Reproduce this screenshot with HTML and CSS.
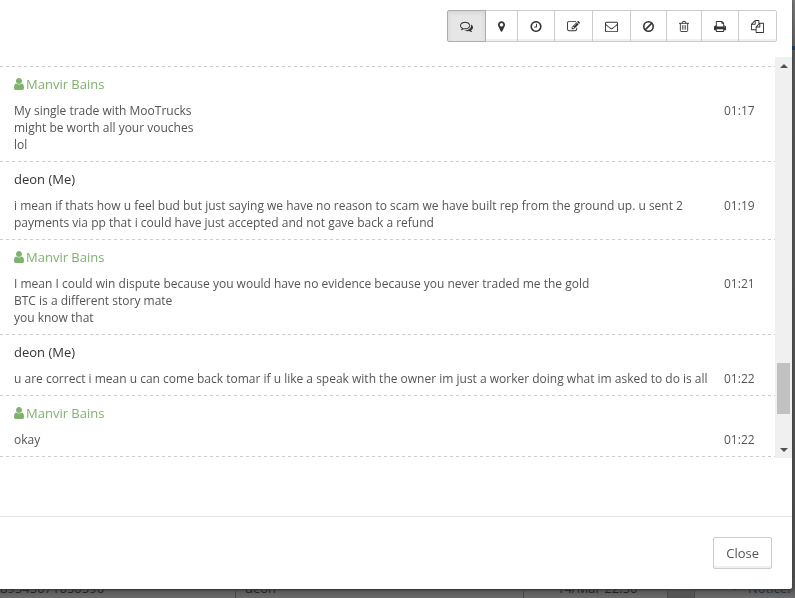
FILE: index.html
```
<!DOCTYPE html>
<html lang="en">
<head>
<meta charset="utf-8">
<title>Conversation</title>
<link rel="stylesheet" href="styles.css">
</head>
<body>
<svg class="sprite" aria-hidden="true">
  <symbol id="user" viewBox="256 0 1280 1792"><path d="M1536 1399q0 109-62.500 187t-150.500 78h-854q-88 0-150.500-78t-62.500-187q0-85 8.500-160.500t31.500-152 58.500-131 94-89 134.500-34.500q131 128 313 128t313-128q76 0 134.500 34.500t94 89 58.500 131 31.500 152 8.500 160.500zm-256-887q0 159-112.500 271.500t-271.500 112.500-271.500-112.500-112.500-271.500 112.500-271.500 271.500-112.500 271.500 112.500 112.500 271.500z"/></symbol>
</svg>

<div class="backdrop" aria-hidden="true">
  <div class="edge"></div>
  <div class="row">
    <span class="cell id">89545071050596</span>
    <span class="cell">deon</span>
    <span class="cell date">14/Mar 22:50</span>
    <span class="cell gutter"></span>
    <span class="cell notice"><i></i>Notice!</span>
  </div>
</div>

<main class="modal">
  <div class="toolbar">
    <button class="tool active" aria-label="Conversation"><svg viewBox="0 0 1792 1792"><path d="M704 384q-153 0-286 52t-211.500 141-78.500 191q0 82 53 158t149 132l97 56-35 84q34-20 62-39l44-31 53 10q78 14 153 14 153 0 286-52t211.500-141 78.500-191-78.500-191-211.500-141-286-52zm0-128q191 0 353.500 68.500t256.500 186.500 94 257-94 257-256.500 186.500-353.500 68.500q-86 0-176-16-124 88-278 128-36 9-86 16h-3q-11 0-20.500-8t-11.500-21q-1-3-1-6.500t.5-6.500 2-6l2.500-5 3.500-5.500 4-5 4.500-5 4-4.500q5-6 23-25t26-29.500 22.500-29 25-38.500 20.500-44q-124-72-195-177t-71-224q0-139 94-257t256.500-186.500 353.500-68.500zm822 1169q10 24 20.500 44t25 38.500 22.500 29 26 29.500 23 25q1 1 4 4.500t4.500 5 4 5 3.500 5.500l2.500 5 2 6 .5 6.500-1 6.500q-3 14-13 22t-22 7q-50-7-86-16-154-40-278-128-90 16-176 16-271 0-472-132 58 4 88 4 161 0 309-45t264-129q125-92 192-212t67-254q0-77-23-152 129 71 204 178t75 230q0 120-71 224.500t-195 176.500z"/></svg></button>
    <button class="tool w7" aria-label="Location"><svg viewBox="384 0 1024 1792"><path d="M1152 640q0-106-75-181t-181-75-181 75-75 181 75 181 181 75 181-75 75-181zm256 0q0 109-33 179l-364 774q-16 33-47.500 52t-67.500 19-67.500-19-46.500-52l-365-774q-33-70-33-179 0-212 150-362t362-150 362 150 150 362z"/></svg></button>
    <button class="tool w12" aria-label="History"><svg viewBox="128 0 1536 1792"><path d="M1024 544v448q0 14-9 23t-23 9h-320q-14 0-23-9t-9-23v-64q0-14 9-23t23-9h224v-352q0-14 9-23t23-9h64q14 0 23 9t9 23zm416 352q0-148-73-273t-198-198-273-73-273 73-198 198-73 273 73 273 198 198 273 73 273-73 198-198 73-273zm224 0q0 209-103 385.500t-279.500 279.500-385.500 103-385.500-103-279.500-279.500-103-385.500 103-385.500 279.500-279.500 385.500-103 385.500 103 279.500 279.500 103 385.500z"/></svg></button>
    <button class="tool" aria-label="Edit"><svg viewBox="0 0 1792 1792"><path d="M888 1184l116-116-152-152-116 116v56h96v96h56zm440-720q-16-16-33 1l-350 350q-17 17-1 33t33-1l350-350q17-17 1-33zm80 594v190q0 119-84.500 203.500t-203.500 84.500h-832q-119 0-203.500-84.500t-84.500-203.500v-832q0-119 84.500-203.500t203.500-84.500h832q63 0 117 25 15 7 18 23 3 17-9 29l-49 49q-14 14-32 8-23-6-45-6h-832q-66 0-113 47t-47 113v832q0 66 47 113t113 47h832q66 0 113-47t47-113v-126q0-13 9-22l64-64q15-15 35-7t20 29zm-96-738l288 288-672 672h-288v-288zm444 132l-92 92-288-288 92-92q28-28 68-28t68 28l152 152q28 28 28 68t-28 68z"/></svg></button>
    <button class="tool" aria-label="Email"><svg viewBox="0 0 1792 1792"><path d="M1664 1504v-768q-32 36-69 66-268 206-426 338-51 43-83 67t-86.500 48.500-102.500 24.500h-2q-48 0-102.500-24.500t-86.500-48.500-83-67q-158-132-426-338-37-30-69-66v768q0 13 9.500 22.500t22.500 9.500h1472q13 0 22.500-9.500t9.500-22.500zm0-1051v-24.500l-.5-13-3-12.500-5.500-9-9-7.500-14-2.500h-1472q-13 0-22.500 9.500t-9.500 22.500q0 168 147 284 193 152 401 317 6 5 35 29.500t46 37.500 44.500 31.500 50.500 27.500 43 9h2q20 0 43-9t50.500-27.500 44.500-31.500 46-37.500 35-29.500q208-165 401-317 54-43 100.500-115.500t46.500-131.500zm128-37v1088q0 66-47 113t-113 47h-1472q-66 0-113-47t-47-113v-1088q0-66 47-113t113-47h1472q66 0 113 47t47 113z"/></svg></button>
    <button class="tool w11" aria-label="Ban"><svg viewBox="128 0 1536 1792"><g fill="none" stroke="currentColor" stroke-width="222"><circle cx="896" cy="896" r="657"/><path d="M431 1361L1361 431"/></g></svg></button>
    <button class="tool w10" aria-label="Delete"><svg viewBox="192 0 1408 1792"><g fill="none" stroke="currentColor" stroke-width="128"><path d="M192 448H1600M384 448V1480Q384 1600 480 1600H1312Q1408 1600 1408 1480V448M608 448L680 256Q690 192 750 192H1042Q1102 192 1112 256L1184 448"/><path stroke-width="100" d="M672 704V1344M896 704V1344M1120 704V1344"/></g></svg></button>
    <button class="tool w12" aria-label="Print"><svg viewBox="64 0 1664 1792"><path d="M448 1536h896v-256h-896v256zm0-640h896v-384h-160q-40 0-68-28t-28-68v-160h-640v640zm1152 64q0-26-19-45t-45-19-45 19-19 45 19 45 45 19 45-19 19-45zm128 0v416q0 13-9.500 22.500t-22.500 9.500h-224v160q0 40-28 68t-68 28h-960q-40 0-68-28t-28-68v-160h-224q-13 0-22.500-9.500t-9.500-22.500v-416q0-79 56.500-135.500t135.500-56.500h64v-544q0-40 28-68t68-28h672q40 0 88 20t76 48l152 152q28 28 48 76t20 88v256h64q79 0 135.500 56.500t56.500 135.500z"/></svg></button>
    <button class="tool" aria-label="Copy"><svg viewBox="0 0 1792 1792"><path d="M1696 384q40 0 68 28t28 68v1216q0 40-28 68t-68 28h-960q-40 0-68-28t-28-68v-288h-544q-40 0-68-28t-28-68v-672q0-40 20-88t48-76l408-408q28-28 76-48t88-20h416q40 0 68 28t28 68v328q68-40 128-40h416zm-544 213l-299 299h299v-299zm-640-384l-299 299h299v-299zm196 647l316-316v-416h-384v416q0 40-28 68t-68 28h-416v640h512v-256q0-40 20-88t48-76zm956 804v-1152h-384v416q0 40-28 68t-68 28h-416v640h896z"/></svg></button>
  </div>

  <div class="chat">
    <div class="messages">
      <article class="message">
        <h2 class="name guest"><svg><use href="#user"/></svg>Manvir Bains</h2>
        <div class="line"><p>My single trade with MooTrucks<br>might be worth all your vouches<br>lol</p><time>01:17</time></div>
      </article>
      <article class="message">
        <h2 class="name">deon (Me)</h2>
        <div class="line"><p>i mean if thats how u feel bud but just saying we have no reason to scam we have built rep from the ground up. u sent 2 payments via pp that i could have just accepted and not gave back a refund</p><time>01:19</time></div>
      </article>
      <article class="message">
        <h2 class="name guest"><svg><use href="#user"/></svg>Manvir Bains</h2>
        <div class="line"><p>I mean I could win dispute because you would have no evidence because you never traded me the gold<br>BTC is a different story mate<br>you know that</p><time>01:21</time></div>
      </article>
      <article class="message">
        <h2 class="name">deon (Me)</h2>
        <div class="line"><p>u are correct i mean u can come back tomar if u like a speak with the owner im just a worker doing what im asked to do is all</p><time>01:22</time></div>
      </article>
      <article class="message">
        <h2 class="name guest"><svg><use href="#user"/></svg>Manvir Bains</h2>
        <div class="line"><p>okay</p><time>01:22</time></div>
      </article>
    </div>
    <div class="scrollbar" aria-hidden="true">
      <span class="arrow up"></span>
      <span class="before"></span>
      <span class="thumb"></span>
      <span class="after"></span>
      <span class="arrow down"></span>
    </div>
  </div>

  <footer class="footer"><button class="close">Close</button></footer>
</main>
</body>
</html>
```
FILE: styles.css
```
* { box-sizing: border-box; }

body {
  margin: 0;
  min-height: 100vh;
  overflow: hidden;
  background: #5c5c5c;
  color: #555;
  font: 12px/17px "Open Sans", sans-serif;
}

.sprite { position: absolute; width: 0; height: 0; }

/* Dimmed page behind the dialog */
.backdrop {
  position: fixed;
  inset: 0;
  display: flex;
  flex-direction: column;
  justify-content: flex-end;
  background: linear-gradient(to top, #6c6c6c, #505050 10px);
}

.edge {
  flex: 1;
  align-self: flex-end;
  width: 3px;
  background: linear-gradient(#777, #555 60px, #4c4c4c);
}

.edge::before {
  content: "";
  display: block;
  height: 4px;
  margin-top: 46px;
  background: #153f68;
}

.row {
  display: grid;
  grid-template-columns: 236fr 288fr 144fr 27fr 100fr;
  height: 20px;
  color: #222;
  font-size: 13px;
  line-height: 20px;
}

.cell { padding-left: 9px; border-right: 1px solid #484848; white-space: nowrap; }
.cell.id { padding-left: 0; }
.cell.date { padding-left: 33px; }
.cell.gutter { background: #555; }
.cell.notice { display: flex; align-items: center; gap: 11px; padding-left: 38px; border: 0; color: #1d3045; }
.cell.notice i { width: 4px; height: 4px; border-radius: 50%; background: #111; }

.modal {
  position: relative;
  margin-right: 3px;
  background: #fff;
  border-bottom-right-radius: 2px;
  box-shadow: 0 1px 2px #333;
}

.toolbar {
  display: flex;
  justify-content: flex-end;
  padding: 10px 15px 15px;
}

.tool, .close {
  height: 32px;
  border: 1px solid #ccc;
  background: #fff;
  box-shadow: inset 0 -2px 0 #f0f0f0;
  color: #333;
  font: inherit;
}

.tool {
  display: flex;
  align-items: center;
  padding: 0 12px;
}

.tool + .tool { margin-left: -1px; }
.tool:first-child { border-radius: 2px 0 0 2px; }
.tool:last-child { border-radius: 0 2px 2px 0; }
.tool.active {
  z-index: 1;
  border-color: #adadad;
  background: #e6e6e6;
  box-shadow: inset 0 2px 4px #d4d4d4;
}

.tool svg { width: 13px; height: 13px; fill: currentColor; }
.tool.w7 svg { width: 7px; }
.tool.w10 svg { width: 10px; }
.tool.w11 svg { width: 11px; }
.tool.w12 svg { width: 12px; }

.chat { display: flex; }

.messages {
  flex: 1;
  padding: 9px 0 1px;
}

.message {
  padding: 9px 0 8px 14px;
  background: repeating-linear-gradient(to right, #ccc 0 3px, transparent 3px 6px) top / 100% 1px no-repeat;
}

.message:last-child {
  padding-bottom: 9px;
  background:
    repeating-linear-gradient(to right, #ccc 0 3px, transparent 3px 6px) top / 100% 1px no-repeat,
    repeating-linear-gradient(to right, #ccc 0 3px, transparent 3px 6px) bottom / 100% 1px no-repeat;
}

.name {
  display: flex;
  align-items: center;
  gap: 2px;
  margin: 0 0 9px;
  color: #333;
  font-size: 13px;
  font-weight: 400;
  line-height: 18px;
}

.name svg { width: 10px; height: 14px; fill: currentColor; }
.guest { color: #7eb26d; }

.line {
  display: flex;
  justify-content: space-between;
  gap: 12px;
}

.line p { margin: 0; }
.line time { flex: none; width: 51px; }

.scrollbar {
  display: flex;
  flex-direction: column;
  width: 17px;
  background: #f0f0f0;
}

.arrow { display: flex; align-items: center; justify-content: center; height: 17px; }
.arrow::before { content: ""; border: 4px solid transparent; }
.up::before { border-top: 0; border-bottom-color: #505050; }
.down::before { border-bottom: 0; border-top-color: #505050; }
.before { flex: 289; }
.thumb { flex: 51; margin: 0 2px; background: #c1c1c1; }
.after { flex: 27; }

.footer {
  display: flex;
  justify-content: flex-end;
  margin-top: 58px;
  padding: 20px;
  border-top: 1px solid #e5e5e5;
}

.close {
  padding: 0 12px;
  border-radius: 2px;
  color: #555;
  font-size: 13px;
}
```
